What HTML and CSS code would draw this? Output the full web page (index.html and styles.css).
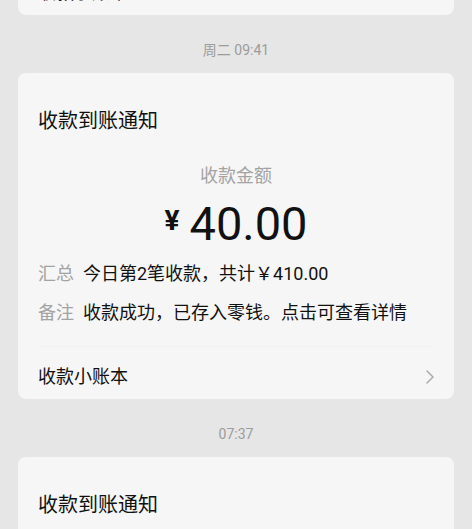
FILE: index.html
```html
<!DOCTYPE html>
<html>
<head>
  <title>收款到账通知</title>
  <meta name="viewport" content="width=device-width, initial-scale=1">
  <link rel="stylesheet" href="styles.css">
</head>
<body>
  <div class="card card-cut">
    <div class="footer">
      <span>收款小账本</span>
      <svg class="chev" width="8" height="14" viewBox="0 0 8 14"><path d="M1 1l6 6-6 6" /></svg>
    </div>
  </div>

  <div class="time">周二 09:41</div>

  <div class="card">
    <div class="title">收款到账通知</div>
    <div class="amount-label">收款金额</div>
    <div class="amount"><span class="yen">¥</span>40.00</div>
    <div class="row"><span class="key">汇总</span><span class="val">今日第2笔收款，共计￥410.00</span></div>
    <div class="row"><span class="key">备注</span><span class="val">收款成功，已存入零钱。点击可查看详情</span></div>
    <div class="footer divided">
      <span>收款小账本</span>
      <svg class="chev" width="8" height="14" viewBox="0 0 8 14"><path d="M1 1l6 6-6 6" /></svg>
    </div>
  </div>

  <div class="time">07:37</div>

  <div class="card">
    <div class="title">收款到账通知</div>
    <div class="amount-label">收款金额</div>
  </div>
</body>
</html>
```

FILE: styles.css
```css
body { margin: 0; background: #e6e6e6; color: #111; font-family: Roboto, "Noto Sans CJK SC", sans-serif; overflow: hidden; }
.card { margin: 0 18px; background: #f6f6f6; border-radius: 8px; padding: 0 20px; }
.card-cut { margin-top: -37px; }
.time { margin: 27px 0 15px; text-align: center; font-size: 14px; line-height: 16px; color: #9c9c9c; }
.title { padding-top: 34px; font-size: 20px; line-height: 28px; }
.amount-label { margin-top: 29px; text-align: center; font-size: 18px; line-height: 24px; color: #a3a3a3; }
.amount { margin-top: 8px; text-align: center; font-size: 47px; line-height: 56px; height: 56px; }
.yen { font-size: 28px; font-weight: 700; line-height: 0; vertical-align: 10px; margin-right: 10px; }
.row { display: flex; align-items: center; height: 39px; font-size: 18px; }
.key { width: 45px; flex-shrink: 0; color: #a3a3a3; }
.footer { display: flex; justify-content: space-between; align-items: center; padding: 18px 0 10px; font-size: 18px; line-height: 24px; }
.footer.divided { margin-top: 16px; border-top: 1px solid #f1f1f1; }
.chev path { fill: none; stroke: #ababab; stroke-width: 1.5; stroke-linecap: round; stroke-linejoin: round; }
```
